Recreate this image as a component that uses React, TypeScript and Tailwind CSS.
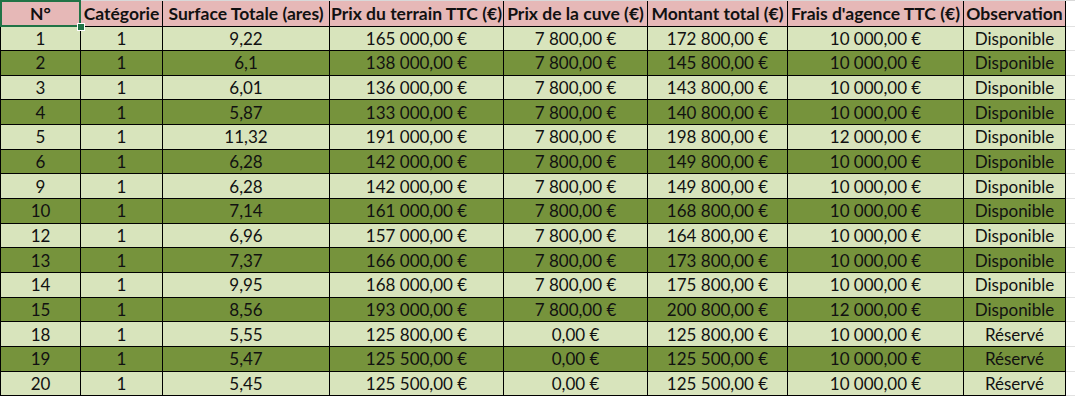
import React from "react";

type Row = {
  n: string;
  surface: string;
  terrain: string;
  cuve: string;
  total: string;
  frais: string;
  obs: string;
};

const rows: Row[] = [
  { n: "1", surface: "9,22", terrain: "165 000,00 €", cuve: "7 800,00 €", total: "172 800,00 €", frais: "10 000,00 €", obs: "Disponible" },
  { n: "2", surface: "6,1", terrain: "138 000,00 €", cuve: "7 800,00 €", total: "145 800,00 €", frais: "10 000,00 €", obs: "Disponible" },
  { n: "3", surface: "6,01", terrain: "136 000,00 €", cuve: "7 800,00 €", total: "143 800,00 €", frais: "10 000,00 €", obs: "Disponible" },
  { n: "4", surface: "5,87", terrain: "133 000,00 €", cuve: "7 800,00 €", total: "140 800,00 €", frais: "10 000,00 €", obs: "Disponible" },
  { n: "5", surface: "11,32", terrain: "191 000,00 €", cuve: "7 800,00 €", total: "198 800,00 €", frais: "12 000,00 €", obs: "Disponible" },
  { n: "6", surface: "6,28", terrain: "142 000,00 €", cuve: "7 800,00 €", total: "149 800,00 €", frais: "10 000,00 €", obs: "Disponible" },
  { n: "9", surface: "6,28", terrain: "142 000,00 €", cuve: "7 800,00 €", total: "149 800,00 €", frais: "10 000,00 €", obs: "Disponible" },
  { n: "10", surface: "7,14", terrain: "161 000,00 €", cuve: "7 800,00 €", total: "168 800,00 €", frais: "10 000,00 €", obs: "Disponible" },
  { n: "12", surface: "6,96", terrain: "157 000,00 €", cuve: "7 800,00 €", total: "164 800,00 €", frais: "10 000,00 €", obs: "Disponible" },
  { n: "13", surface: "7,37", terrain: "166 000,00 €", cuve: "7 800,00 €", total: "173 800,00 €", frais: "10 000,00 €", obs: "Disponible" },
  { n: "14", surface: "9,95", terrain: "168 000,00 €", cuve: "7 800,00 €", total: "175 800,00 €", frais: "10 000,00 €", obs: "Disponible" },
  { n: "15", surface: "8,56", terrain: "193 000,00 €", cuve: "7 800,00 €", total: "200 800,00 €", frais: "12 000,00 €", obs: "Disponible" },
  { n: "18", surface: "5,55", terrain: "125 800,00 €", cuve: "0,00 €", total: "125 800,00 €", frais: "10 000,00 €", obs: "Réservé" },
  { n: "19", surface: "5,47", terrain: "125 500,00 €", cuve: "0,00 €", total: "125 500,00 €", frais: "10 000,00 €", obs: "Réservé" },
  { n: "20", surface: "5,45", terrain: "125 500,00 €", cuve: "0,00 €", total: "125 500,00 €", frais: "10 000,00 €", obs: "Réservé" },
];

const headers = [
  "N°",
  "Catégorie",
  "Surface Totale (ares)",
  "Prix du terrain TTC (€)",
  "Prix de la cuve (€)",
  "Montant total (€)",
  "Frais d'agence TTC (€)",
  "Observation",
];

const cell = "border border-black px-0 text-center whitespace-nowrap leading-none";

export default function App() {
  return (
    <div className="w-[1075px] h-[400px] bg-white overflow-hidden font-['Lato',_'Noto_Sans',_sans-serif] text-[17px] text-[#111]">
      <div className="h-px bg-[#d9d9d9]" />
      <table className="border-collapse table-fixed w-[1075px]">
        <colgroup>
          <col className="w-[80px]" />
          <col className="w-[82px]" />
          <col className="w-[167px]" />
          <col className="w-[174px]" />
          <col className="w-[144px]" />
          <col className="w-[140px]" />
          <col className="w-[176px]" />
          <col className="w-[102px]" />
          <col className="w-[10px]" />
        </colgroup>
        <thead>
          <tr className="h-[25px] bg-[#e6b8b7]">
            {headers.map((h, i) => (
              <th
                key={h}
                className={`${cell} font-bold text-[17.5px] border-t-0 ${i === 0 ? "relative" : ""}`}
              >
                {h}
                {i === 0 && (
                  <>
                    <div className="absolute -left-px -top-px -right-px -bottom-px border-2 border-[#217346] pointer-events-none" />
                    <div className="absolute -right-[5px] -bottom-[5px] w-[8px] h-[8px] bg-[#217346] border border-white" />
                  </>
                )}
              </th>
            ))}
            <td className="bg-white border-b border-[#e1e1e1]" />
          </tr>
        </thead>
        <tbody>
          {rows.map((r, i) => (
            <tr
              key={r.n}
              className={`h-[24.67px] ${i % 2 === 0 ? "bg-[#d8e4bc]" : "bg-[#76933c]"}`}
            >
              <td className={cell}>{r.n}</td>
              <td className={cell}>1</td>
              <td className={cell}>{r.surface}</td>
              <td className={cell}>{r.terrain}</td>
              <td className={cell}>{r.cuve}</td>
              <td className={cell}>{r.total}</td>
              <td className={cell}>{r.frais}</td>
              <td className={cell}>{r.obs}</td>
              <td className="bg-white border-b border-[#e1e1e1]" />
            </tr>
          ))}
        </tbody>
      </table>
    </div>
  );
}
